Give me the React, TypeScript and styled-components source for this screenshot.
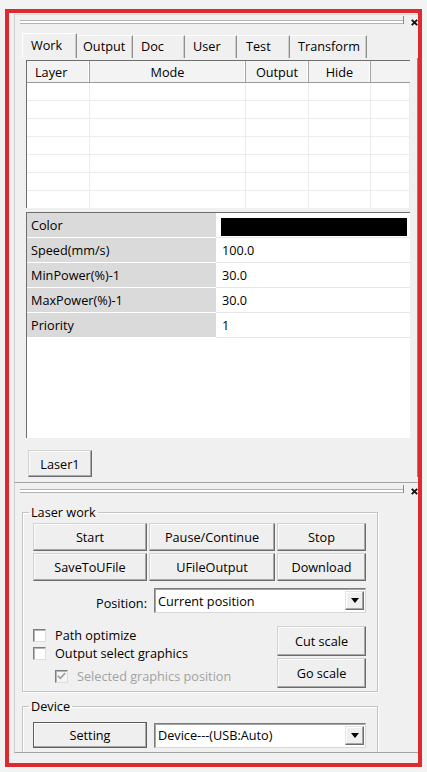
import React from "react";
import styled, { createGlobalStyle } from "styled-components";

const FONT = `"Open Sans", "Liberation Sans", "DejaVu Sans", sans-serif`;

const GlobalStyle = createGlobalStyle`
  html, body { margin: 0; padding: 0; background: #f3f3f3; }
  body { font-family: ${FONT}; font-size: 12.7px; color: #000; }
  * { box-sizing: border-box; }
`;

const Stage = styled.div`
  width: 427px;
  height: 772px;
  padding: 9px 5px 5px 5px;
  background: #f3f3f3;
`;

const Frame = styled.div`
  height: 100%;
  border: 4px solid #dd2a31;
  background: #f0f0f0;
  display: flex;
  flex-direction: column;
  overflow: hidden;
`;

const Panel = styled.section<{ $h: number; $first?: boolean }>`
  flex: 0 0 auto;
  height: ${p => p.$h}px;
  margin-left: 5px;
  margin-top: ${p => (p.$first ? 1 : 0)}px;
  border-left: 1px solid #cfcfcf;
  border-top: ${p => (p.$first ? "1px solid #d8d8d8" : "none")};
  border-bottom: 1px solid #a3a3a3;
  display: flex;
  flex-direction: column;
  overflow: hidden;
`;

/* docking grip with the close cross */
const Grip = styled.div<{ $h: number; $pt: number }>`
  flex: 0 0 ${p => p.$h}px;
  display: flex;
  align-items: flex-start;
  padding: ${p => p.$pt}px 0 0 5px;
`;

const GripBar = styled.div`
  width: 386px;
  height: 8px;
  display: flex;
  align-items: flex-end;
`;

const GripLine = styled.div`
  flex: 1;
  height: 4px;
  background: #fff;
  border-top: 1px solid #b3b3b3;
  border-bottom: 1px solid #b3b3b3;
`;

const GripTick = styled.div`
  width: 1px;
  height: 8px;
  background: #8a8a8a;
`;

const CloseX = styled.svg`
  margin: 3px 0 0 7px;
  flex: 0 0 auto;
`;

const DockGrip = ({ h, pt }: { h: number; pt: number }) => (
  <Grip $h={h} $pt={pt}>
    <GripBar>
      <GripLine />
      <GripTick />
    </GripBar>
    <CloseX width="7" height="7" viewBox="0 0 7 7">
      <path d="M0.8 0.8 L6.2 6.2 M6.2 0.8 L0.8 6.2" stroke="#111" strokeWidth="1.9" />
    </CloseX>
  </Grip>
);

/* tabs */
const TabStrip = styled.div`
  flex: 0 0 27px;
  display: flex;
  align-items: flex-end;
  padding-left: 7px;
`;

const Tab = styled.div<{ $w: number; $active?: boolean; $pad?: number }>`
  width: ${p => p.$w}px;
  height: ${p => (p.$active ? 25 : 23)}px;
  padding: 0 0 ${p => (p.$active ? 3 : 2)}px ${p => p.$pad ?? 7}px;
  background: #f0f0f0;
  border-top: 1px solid #fff;
  border-left: 1px solid ${p => (p.$active ? "#fff" : "#f0f0f0")};
  border-right: 1px solid #8f8f8f;
  box-shadow: inset -1px 0 #cdcdcd;
  display: flex;
  align-items: center;
  white-space: nowrap;
`;

const TabPage = styled.div`
  flex: 0 0 419px;
  margin-left: 7px;
  padding: 2px 7px 0 4px;
  border-right: 1px solid #8a8a8a;
  display: flex;
  flex-direction: column;
`;

/* layer list */
const LIST_COLS = "63px 156px 63px 62px 1fr";

const List = styled.div`
  flex: 0 0 148px;
  border-left: 1px solid #6e6e6e;
  border-top: 1px solid #6e6e6e;
  background: #fff;
  overflow: hidden;
`;

const ListHeader = styled.div`
  height: 22px;
  display: grid;
  grid-template-columns: ${LIST_COLS};
  background: #f3f3f3;
  border-bottom: 1px solid #9a9a9a;
`;

const HeadCell = styled.div<{ $left?: boolean; $last?: boolean }>`
  display: flex;
  align-items: center;
  justify-content: ${p => (p.$left ? "flex-start" : "center")};
  padding-left: ${p => (p.$left ? 8 : 0)}px;
  border-right: ${p => (p.$last ? "none" : "1px solid #a5a5a5")};
  box-shadow: ${p => (p.$last ? "none" : "inset -1px 0 #fff")};
`;

const ListRow = styled.div`
  height: 18px;
  display: grid;
  grid-template-columns: ${LIST_COLS};
`;

const ListCell = styled.div`
  border-right: 1px solid #ececec;
  border-bottom: 1px solid #ececec;
`;

/* property grid */
const PropGrid = styled.div`
  flex: 0 0 226px;
  margin-top: 4px;
  border-left: 1px solid #6e6e6e;
  border-top: 1px solid #6e6e6e;
  background: #fff;
`;

const PropRow = styled.div`
  height: 25px;
  display: grid;
  grid-template-columns: 189px 1fr;
`;

const PropLabel = styled.div`
  background: #dadada;
  border-bottom: 1px solid #fff;
  padding-left: 4px;
  display: flex;
  align-items: center;
`;

const PropValue = styled.div`
  border-bottom: 1px solid #e6e6e6;
  padding-left: 6px;
  display: flex;
  align-items: center;
`;

const Swatch = styled.div<{ $color: string }>`
  align-self: stretch;
  margin: 5px 3px 1px -1px;
  flex: 1;
  background: ${p => p.$color};
`;

/* buttons */
const Button = styled.button<{ $w?: number; $h?: number; $default?: boolean }>`
  font: inherit;
  color: #000;
  width: ${p => (p.$w ? `${p.$w}px` : "100%")};
  height: ${p => p.$h ?? 28}px;
  flex: 0 0 auto;
  padding: 0;
  background: #efefef;
  border: 1px solid;
  border-color: ${p => (p.$default ? "#5e5e5e" : "#d2d2d2 #6c6c6c #6c6c6c #d2d2d2")};
  box-shadow: inset -1px -1px #a8a8a8, inset 1px 1px #fbfbfb;
  display: flex;
  align-items: center;
  justify-content: center;
`;

const TabFooter = styled.div`
  margin-top: 12px;
  padding-left: 2px;
`;

/* group boxes */
const Group = styled.fieldset<{ $mt: number; $pb?: number }>`
  flex: 0 0 auto;
  margin: ${p => p.$mt}px 0 0 7px;
  width: 356px;
  min-width: 0;
  padding: 4px 11px ${p => p.$pb ?? 3}px 10px;
  border: 1px solid #c3c3c3;
  box-shadow: 1px 1px #fff, inset 1px 1px #fff;
`;

const Legend = styled.legend`
  padding: 0 2px;
  margin-left: -4px;
  line-height: 14px;
  height: 14px;
`;

const ButtonGrid = styled.div`
  display: grid;
  grid-template-columns: 114px 126px 89px;
  grid-auto-rows: 28px;
  gap: 2px;
`;

const FieldRow = styled.div<{ $mt: number }>`
  margin-top: ${p => p.$mt}px;
  display: flex;
  align-items: center;
`;

const FieldLabel = styled.div`
  width: 114px;
  text-align: right;
  align-self: flex-end;
  padding-bottom: 1px;
`;

const Combo = styled.div`
  margin-left: 7px;
  width: 212px;
  height: 25px;
  background: #fff;
  border: 1px solid;
  border-color: #7c7c7c #d7d7d7 #d7d7d7 #7c7c7c;
  box-shadow: inset 1px 1px #a6a6a6;
  display: flex;
  align-items: center;
  padding: 0 1px 0 3px;
`;

const ComboText = styled.span`
  flex: 1;
  white-space: nowrap;
`;

const DropButton = styled.div`
  width: 19px;
  height: 19px;
  background: #efefef;
  border: 1px solid;
  border-color: #e4e4e4 #6c6c6c #6c6c6c #e4e4e4;
  box-shadow: inset -1px -1px #a8a8a8, inset 1px 1px #fff;
  display: flex;
  align-items: center;
  justify-content: center;
`;

const ComboBox = ({ value }: { value: string }) => (
  <Combo>
    <ComboText>{value}</ComboText>
    <DropButton>
      <svg width="8" height="5" viewBox="0 0 8 5">
        <path d="M0 0 H8 L4 5 Z" fill="#000" />
      </svg>
    </DropButton>
  </Combo>
);

const Options = styled.div`
  margin-top: 13px;
  height: 62px;
  display: flex;
`;

const CheckColumn = styled.div`
  flex: 1;
  display: flex;
  flex-direction: column;
`;

const ScaleColumn = styled.div`
  width: 89px;
  display: flex;
  flex-direction: column;
  gap: 2px;
`;

const CheckRow = styled.label<{ $indent?: number; $mt?: number; $disabled?: boolean }>`
  height: 18px;
  margin-top: ${p => p.$mt ?? 0}px;
  padding-left: ${p => p.$indent ?? 0}px;
  display: flex;
  align-items: center;
  gap: 9px;
  color: ${p => (p.$disabled ? "#a2a2a2" : "#000")};
  white-space: nowrap;
`;

const Box = styled.span<{ $disabled?: boolean }>`
  width: 13px;
  height: 13px;
  flex: 0 0 13px;
  border: 1px solid;
  border-color: #7d7d7d #dedede #dedede #7d7d7d;
  box-shadow: inset 1px 1px #b4b4b4;
  background: ${p => (p.$disabled ? "#f4f4f4" : "#fff")};
  display: flex;
  align-items: center;
  justify-content: center;
`;

const CheckBox = ({
  label,
  checked,
  disabled,
  indent,
  mt,
}: {
  label: string;
  checked?: boolean;
  disabled?: boolean;
  indent?: number;
  mt?: number;
}) => (
  <CheckRow $indent={indent} $mt={mt} $disabled={disabled}>
    <Box $disabled={disabled}>
      {checked && (
        <svg width="9" height="8" viewBox="0 0 9 8">
          <path d="M0.8 3.8 L3.3 6.3 L8.2 1" stroke={disabled ? "#9c9c9c" : "#000"} strokeWidth="1.6" fill="none" />
        </svg>
      )}
    </Box>
    {label}
  </CheckRow>
);

const tabs = [
  { name: "Work", w: 55, active: true, pad: 8 },
  { name: "Output", w: 56, pad: 5 },
  { name: "Doc", w: 52 },
  { name: "User", w: 52 },
  { name: "Test", w: 53, pad: 8 },
  { name: "Transform", w: 77 },
];

const props = [
  { label: "Color", color: "#000" },
  { label: "Speed(mm/s)", value: "100.0" },
  { label: "MinPower(%)-1", value: "30.0" },
  { label: "MaxPower(%)-1", value: "30.0" },
  { label: "Priority", value: "1" },
];

export default function App() {
  return (
    <>
      <GlobalStyle />
      <Stage>
        <Frame>
          <Panel $h={469} $first>
            <DockGrip h={16} pt={1} />
            <TabStrip>
              {tabs.map(t => (
                <Tab key={t.name} $w={t.w} $active={t.active} $pad={t.pad}>
                  {t.name}
                </Tab>
              ))}
            </TabStrip>
            <TabPage>
              <List>
                <ListHeader>
                  <HeadCell $left>Layer</HeadCell>
                  <HeadCell>Mode</HeadCell>
                  <HeadCell>Output</HeadCell>
                  <HeadCell>Hide</HeadCell>
                  <HeadCell $last />
                </ListHeader>
                {Array.from({ length: 7 }).map((_, r) => (
                  <ListRow key={r}>
                    {Array.from({ length: 5 }).map((__, c) => (
                      <ListCell key={c} />
                    ))}
                  </ListRow>
                ))}
              </List>
              <PropGrid>
                {props.map(p => (
                  <PropRow key={p.label}>
                    <PropLabel>{p.label}</PropLabel>
                    <PropValue>{p.color ? <Swatch $color={p.color} /> : p.value}</PropValue>
                  </PropRow>
                ))}
              </PropGrid>
              <TabFooter>
                <Button $w={64} $h={27}>Laser1</Button>
              </TabFooter>
            </TabPage>
          </Panel>

          <Panel $h={270}>
            <DockGrip h={17} pt={2} />
            <Group $mt={5}>
              <Legend>Laser work</Legend>
              <ButtonGrid>
                <Button>Start</Button>
                <Button>Pause/Continue</Button>
                <Button>Stop</Button>
                <Button>SaveToUFile</Button>
                <Button>UFileOutput</Button>
                <Button>Download</Button>
              </ButtonGrid>
              <FieldRow $mt={7}>
                <FieldLabel>Position:</FieldLabel>
                <ComboBox value="Current position" />
              </FieldRow>
              <Options>
                <CheckColumn>
                  <CheckBox label="Path optimize" />
                  <CheckBox label="Output select graphics" />
                  <CheckBox label="Selected graphics position" checked disabled indent={22} mt={5} />
                </CheckColumn>
                <ScaleColumn>
                  <Button $h={30}>Cut scale</Button>
                  <Button $h={30}>Go scale</Button>
                </ScaleColumn>
              </Options>
            </Group>
            <Group $mt={7} $pb={20}>
              <Legend>Device</Legend>
              <FieldRow $mt={5}>
                <Button $w={114} $h={26} $default>Setting</Button>
                <ComboBox value="Device---(USB:Auto)" />
              </FieldRow>
            </Group>
          </Panel>
        </Frame>
      </Stage>
    </>
  );
}
